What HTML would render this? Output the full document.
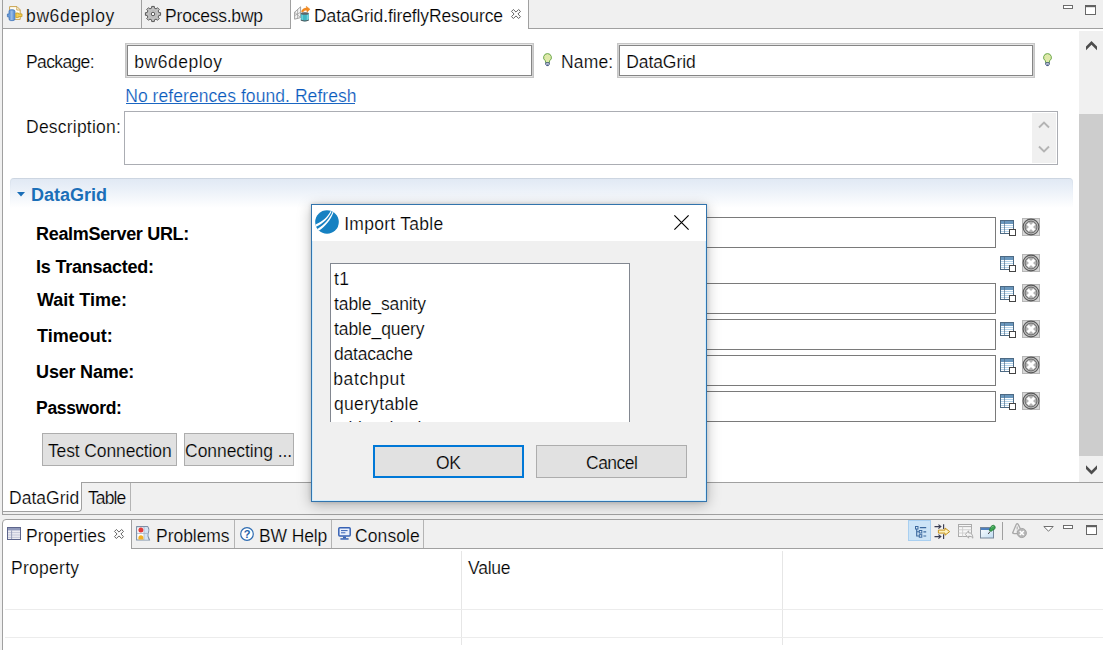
<!DOCTYPE html>
<html lang="en">
<head>
<meta charset="utf-8">
<title>DataGrid.fireflyResource - Import Table</title>
<style>
html,body{margin:0;padding:0;}
body{width:1103px;height:650px;overflow:hidden;background:#fff;position:relative;font-family:"Liberation Sans",sans-serif;}
.a{position:absolute;}
.t{position:absolute;white-space:nowrap;line-height:1;font-family:"Liberation Sans",sans-serif;color:#000;}
.ln{position:absolute;background:#a0a0a0;}
.inp2{position:absolute;box-sizing:border-box;border:1px solid #c6c6c6;background:#fff;}
.inp2 i{position:absolute;left:0;top:0;right:0;bottom:0;border:1px solid #e6e6e6;border-left-color:#cfcfcf;border-right-color:#cfcfcf;display:block;box-shadow:inset 0 0 0 1px #858585;}
.inp{position:absolute;box-sizing:border-box;border:1px solid #7a7a7a;background:#fff;}
.btn{position:absolute;box-sizing:border-box;border:1px solid #adadad;background:#e1e1e1;}
svg{position:absolute;overflow:visible;}
</style>
</head>
<body>
<!-- ===== top editor tab bar ===== -->
<div class="a" style="left:0;top:0;width:1103px;height:28px;background:#f0f0f0;"></div>
<div class="a" style="left:0;top:28px;width:3px;height:490px;background:#f0f0f0;"></div>
<div class="ln" style="left:2px;top:0;width:1px;height:514px;"></div>
<div class="ln" style="left:141px;top:0;width:1px;height:28px;"></div>
<div class="a" style="left:291px;top:0;width:237px;height:29px;background:#fff;"></div>
<div class="ln" style="left:290px;top:0;width:1px;height:28px;"></div>
<div class="ln" style="left:528px;top:0;width:1px;height:28px;"></div>
<div class="ln" style="left:3px;top:28px;width:288px;height:1px;"></div>
<div class="ln" style="left:528px;top:28px;width:575px;height:1px;"></div>
<svg style="left:7px;top:6px" width="16" height="15" viewBox="0 0 16 15"><path d="M2.6 0.6H10L13.2 3.8V13.4H2.6Z" fill="#fffdf2" stroke="#c9a350" stroke-width="1"/><path d="M9.8 0.8V4H13" fill="none" stroke="#c9a350" stroke-width="0.9"/><path d="M0.4 8H2V5.4Q2 3.8 3.6 3.8H6Q8 3.8 8 5.6V12.6Q8 14.6 6 14.6H3.6Q2 14.6 2 12.6V10.8H0.4Z" fill="#6a9bd8" stroke="#3f74b8" stroke-width="0.8"/><rect x="3.6" y="4.6" width="2" height="9.4" fill="#9fc0ea" opacity=".8"/><path d="M8.8 7H11.4V7.9H15V10.6H11.4V11.6H8.8Z" fill="#f3cf55" stroke="#c59a1c" stroke-width="0.8"/></svg>
<svg style="left:145px;top:6px" width="16" height="16" viewBox="0 0 16 16"><path d="M13.83 6.60 L15.59 6.68 L15.59 9.32 L13.83 9.40 L13.12 11.13 L14.30 12.43 L12.43 14.30 L11.13 13.12 L9.40 13.83 L9.32 15.59 L6.68 15.59 L6.60 13.83 L4.87 13.12 L3.57 14.30 L1.70 12.43 L2.88 11.13 L2.17 9.40 L0.41 9.32 L0.41 6.68 L2.17 6.60 L2.88 4.87 L1.70 3.57 L3.57 1.70 L4.87 2.88 L6.60 2.17 L6.68 0.41 L9.32 0.41 L9.40 2.17 L11.13 2.88 L12.43 1.70 L14.30 3.57 L13.12 4.87Z" fill="#c2c2c2" stroke="#585858" stroke-width="1" stroke-linejoin="round"/><circle cx="8" cy="8" r="3.4" fill="#cfcfcf" stroke="#a0a0a0" stroke-width="0.5"/><circle cx="8" cy="8" r="1.8" fill="#fafafa" stroke="#4e4e4e" stroke-width="1"/></svg>
<svg style="left:294px;top:6px" width="16" height="16" viewBox="0 0 16 16"><path d="M0.6 6.2L6.6 0.8V11.6L0.6 13.2Z" fill="#f4f4f4" stroke="#8c8c8c" stroke-width="0.8"/><path d="M0.6 9.7L6.6 6.2M3.6 3.5V12.4M0.6 6.2L6.6 11.6" fill="none" stroke="#9a9a9a" stroke-width="0.7"/><path d="M7.4 5.6C8.2 3 10.6 1.8 12.6 2.2L12.2 0.2L16 3.2L13 6.2L12.8 4.4C11.2 4.2 9.8 4.8 9 6.2Z" fill="#f58a1f" stroke="#e07a10" stroke-width="0.4"/><path d="M6.8 7.6Q10.8 5.8 14.8 7.6V14.2Q10.8 16.2 6.8 14.2Z" fill="#3fb7c4"/><path d="M8.2 8.4V14.6M13.4 8.4V14.6" stroke="#8fe0e6" stroke-width="1.2" opacity=".7"/><ellipse cx="10.8" cy="7.5" rx="4" ry="1.3" fill="#5e6468"/><path d="M6.8 13.6Q10.8 15.6 14.8 13.6V14.6Q10.8 16.6 6.8 14.6Z" fill="#4c5357"/></svg>
<svg style="left:511px;top:9px" width="10" height="10" viewBox="0 0 10 10"><path d="M0.5 2.4 L2.4 0.5 L5 3.1 L7.6 0.5 L9.5 2.4 L6.9 5 L9.5 7.6 L7.6 9.5 L5 6.9 L2.4 9.5 L0.5 7.6 L3.1 5 Z" fill="#fff" stroke="#5c5c5c" stroke-width="0.95" stroke-linejoin="miter"/></svg>
<svg style="left:1063px;top:5px" width="10" height="4" viewBox="0 0 10 4"><rect x="0.5" y="0.5" width="9" height="3" fill="#fff" stroke="#666" stroke-width="0.95"/></svg>
<svg style="left:1085px;top:5px" width="11" height="10" viewBox="0 0 11 10"><rect x="0.5" y="0.5" width="10" height="9" fill="#fff" stroke="#606060" stroke-width="0.95"/><rect x="0.5" y="0.5" width="10" height="1.7" fill="#606060"/></svg>
<svg style="left:543px;top:52.5px" width="9" height="13" viewBox="0 0 9 13"><path d="M4.5 0.6A3.9 3.9 0 0 1 6.6 7.8L6.4 9.6H2.6L2.4 7.8A3.9 3.9 0 0 1 4.5 0.6Z" fill="#dfe9a9" stroke="#6aa84c" stroke-width="1"/><path d="M2.7 9.8H6.3V11.4L5.4 12.6H3.6L2.7 11.4Z" fill="#e8ecf6" stroke="#3d4f7c" stroke-width="0.9"/><path d="M3.4 11.4H5.6L5.2 12.6H3.8Z" fill="#3d4f7c"/></svg>
<svg style="left:1043px;top:52.5px" width="9" height="13" viewBox="0 0 9 13"><path d="M4.5 0.6A3.9 3.9 0 0 1 6.6 7.8L6.4 9.6H2.6L2.4 7.8A3.9 3.9 0 0 1 4.5 0.6Z" fill="#dfe9a9" stroke="#6aa84c" stroke-width="1"/><path d="M2.7 9.8H6.3V11.4L5.4 12.6H3.6L2.7 11.4Z" fill="#e8ecf6" stroke="#3d4f7c" stroke-width="0.9"/><path d="M3.4 11.4H5.6L5.2 12.6H3.8Z" fill="#3d4f7c"/></svg>
<!-- ===== editor form ===== -->
<div class="inp2" style="left:125px;top:43px;width:409px;height:35px;"><i></i></div>
<div class="inp2" style="left:617px;top:43px;width:418px;height:35px;"><i></i></div>
<div class="inp" style="left:124px;top:111px;width:934px;height:54px;border-color:#abadb3;"></div>
<div class="a" style="left:1032px;top:113px;width:24px;height:50px;background:#f0f0f0;"></div>
<!-- section header -->
<div class="a" style="left:10px;top:178px;width:1063px;height:34px;border-radius:4px 4px 0 0;background:linear-gradient(#c3ccd8 0,#d6dfea 1px,#e6edf6 10px,#fff 30px);"></div>
<div class="a" style="left:11px;top:179px;width:1061px;height:33px;border-radius:3px 3px 0 0;background:linear-gradient(#e1e9f4 0,#eaf0f8 10px,#fff 29px);"></div>
<svg style="left:17px;top:192px" width="8" height="5" viewBox="0 0 8 5"><path d="M0 0H8L4 4.6Z" fill="#1b6fb8"/></svg>
<!-- field inputs -->
<div class="inp" style="left:330px;top:217px;width:666px;height:31px;"></div>
<div class="inp" style="left:330px;top:283px;width:666px;height:31px;"></div>
<div class="inp" style="left:330px;top:319px;width:666px;height:31px;"></div>
<div class="inp" style="left:330px;top:355px;width:666px;height:31px;"></div>
<div class="inp" style="left:330px;top:391px;width:666px;height:31px;"></div>
<svg style="left:1000px;top:220px" width="16" height="16" viewBox="0 0 16 16"><rect x="0.5" y="0.5" width="13" height="13" fill="#fff" stroke="#4d6a84" stroke-width="1"/><rect x="1" y="1" width="12" height="3" fill="#6a97bd"/><path d="M1 5.5H13M1 7.5H13M1 9.5H13M1 11.5H13" stroke="#b4d3ea" stroke-width="1"/><path d="M4.5 1V13" stroke="#4d6a84" stroke-width="0.9" opacity=".75"/><rect x="9.5" y="9.5" width="6" height="6" fill="#fff" stroke="#444" stroke-width="1"/></svg>
<svg style="left:1022px;top:218px" width="18" height="18" viewBox="0 0 18 18"><rect x="0.5" y="0.5" width="17" height="17" fill="#d7d7d7" stroke="#b6b6b6" stroke-width="1"/><circle cx="9" cy="9" r="7.9" fill="#cacaca" stroke="#585858" stroke-width="1.1"/><circle cx="9" cy="9" r="6" fill="#b2b2b2" stroke="#666" stroke-width="1"/><path d="M5.7 5.7L12.3 12.3M12.3 5.7L5.7 12.3" stroke="#fff" stroke-width="3" stroke-linecap="butt"/></svg>
<svg style="left:1000px;top:256px" width="16" height="16" viewBox="0 0 16 16"><rect x="0.5" y="0.5" width="13" height="13" fill="#fff" stroke="#4d6a84" stroke-width="1"/><rect x="1" y="1" width="12" height="3" fill="#6a97bd"/><path d="M1 5.5H13M1 7.5H13M1 9.5H13M1 11.5H13" stroke="#b4d3ea" stroke-width="1"/><path d="M4.5 1V13" stroke="#4d6a84" stroke-width="0.9" opacity=".75"/><rect x="9.5" y="9.5" width="6" height="6" fill="#fff" stroke="#444" stroke-width="1"/></svg>
<svg style="left:1022px;top:254px" width="18" height="18" viewBox="0 0 18 18"><rect x="0.5" y="0.5" width="17" height="17" fill="#d7d7d7" stroke="#b6b6b6" stroke-width="1"/><circle cx="9" cy="9" r="7.9" fill="#cacaca" stroke="#585858" stroke-width="1.1"/><circle cx="9" cy="9" r="6" fill="#b2b2b2" stroke="#666" stroke-width="1"/><path d="M5.7 5.7L12.3 12.3M12.3 5.7L5.7 12.3" stroke="#fff" stroke-width="3" stroke-linecap="butt"/></svg>
<svg style="left:1000px;top:286px" width="16" height="16" viewBox="0 0 16 16"><rect x="0.5" y="0.5" width="13" height="13" fill="#fff" stroke="#4d6a84" stroke-width="1"/><rect x="1" y="1" width="12" height="3" fill="#6a97bd"/><path d="M1 5.5H13M1 7.5H13M1 9.5H13M1 11.5H13" stroke="#b4d3ea" stroke-width="1"/><path d="M4.5 1V13" stroke="#4d6a84" stroke-width="0.9" opacity=".75"/><rect x="9.5" y="9.5" width="6" height="6" fill="#fff" stroke="#444" stroke-width="1"/></svg>
<svg style="left:1022px;top:284px" width="18" height="18" viewBox="0 0 18 18"><rect x="0.5" y="0.5" width="17" height="17" fill="#d7d7d7" stroke="#b6b6b6" stroke-width="1"/><circle cx="9" cy="9" r="7.9" fill="#cacaca" stroke="#585858" stroke-width="1.1"/><circle cx="9" cy="9" r="6" fill="#b2b2b2" stroke="#666" stroke-width="1"/><path d="M5.7 5.7L12.3 12.3M12.3 5.7L5.7 12.3" stroke="#fff" stroke-width="3" stroke-linecap="butt"/></svg>
<svg style="left:1000px;top:322px" width="16" height="16" viewBox="0 0 16 16"><rect x="0.5" y="0.5" width="13" height="13" fill="#fff" stroke="#4d6a84" stroke-width="1"/><rect x="1" y="1" width="12" height="3" fill="#6a97bd"/><path d="M1 5.5H13M1 7.5H13M1 9.5H13M1 11.5H13" stroke="#b4d3ea" stroke-width="1"/><path d="M4.5 1V13" stroke="#4d6a84" stroke-width="0.9" opacity=".75"/><rect x="9.5" y="9.5" width="6" height="6" fill="#fff" stroke="#444" stroke-width="1"/></svg>
<svg style="left:1022px;top:320px" width="18" height="18" viewBox="0 0 18 18"><rect x="0.5" y="0.5" width="17" height="17" fill="#d7d7d7" stroke="#b6b6b6" stroke-width="1"/><circle cx="9" cy="9" r="7.9" fill="#cacaca" stroke="#585858" stroke-width="1.1"/><circle cx="9" cy="9" r="6" fill="#b2b2b2" stroke="#666" stroke-width="1"/><path d="M5.7 5.7L12.3 12.3M12.3 5.7L5.7 12.3" stroke="#fff" stroke-width="3" stroke-linecap="butt"/></svg>
<svg style="left:1000px;top:358px" width="16" height="16" viewBox="0 0 16 16"><rect x="0.5" y="0.5" width="13" height="13" fill="#fff" stroke="#4d6a84" stroke-width="1"/><rect x="1" y="1" width="12" height="3" fill="#6a97bd"/><path d="M1 5.5H13M1 7.5H13M1 9.5H13M1 11.5H13" stroke="#b4d3ea" stroke-width="1"/><path d="M4.5 1V13" stroke="#4d6a84" stroke-width="0.9" opacity=".75"/><rect x="9.5" y="9.5" width="6" height="6" fill="#fff" stroke="#444" stroke-width="1"/></svg>
<svg style="left:1022px;top:356px" width="18" height="18" viewBox="0 0 18 18"><rect x="0.5" y="0.5" width="17" height="17" fill="#d7d7d7" stroke="#b6b6b6" stroke-width="1"/><circle cx="9" cy="9" r="7.9" fill="#cacaca" stroke="#585858" stroke-width="1.1"/><circle cx="9" cy="9" r="6" fill="#b2b2b2" stroke="#666" stroke-width="1"/><path d="M5.7 5.7L12.3 12.3M12.3 5.7L5.7 12.3" stroke="#fff" stroke-width="3" stroke-linecap="butt"/></svg>
<svg style="left:1000px;top:394px" width="16" height="16" viewBox="0 0 16 16"><rect x="0.5" y="0.5" width="13" height="13" fill="#fff" stroke="#4d6a84" stroke-width="1"/><rect x="1" y="1" width="12" height="3" fill="#6a97bd"/><path d="M1 5.5H13M1 7.5H13M1 9.5H13M1 11.5H13" stroke="#b4d3ea" stroke-width="1"/><path d="M4.5 1V13" stroke="#4d6a84" stroke-width="0.9" opacity=".75"/><rect x="9.5" y="9.5" width="6" height="6" fill="#fff" stroke="#444" stroke-width="1"/></svg>
<svg style="left:1022px;top:392px" width="18" height="18" viewBox="0 0 18 18"><rect x="0.5" y="0.5" width="17" height="17" fill="#d7d7d7" stroke="#b6b6b6" stroke-width="1"/><circle cx="9" cy="9" r="7.9" fill="#cacaca" stroke="#585858" stroke-width="1.1"/><circle cx="9" cy="9" r="6" fill="#b2b2b2" stroke="#666" stroke-width="1"/><path d="M5.7 5.7L12.3 12.3M12.3 5.7L5.7 12.3" stroke="#fff" stroke-width="3" stroke-linecap="butt"/></svg>
<!-- buttons -->
<div class="btn" style="left:42px;top:433px;width:135px;height:33px;"></div>
<div class="btn" style="left:184px;top:433px;width:110px;height:33px;"></div>
<!-- scrollbar -->
<div class="a" style="left:1079px;top:31px;width:24px;height:451px;background:#f0f0f0;"></div>
<div class="a" style="left:1079px;top:114px;width:24px;height:342px;background:#cdcdcd;"></div>
<svg style="left:1086px;top:41px" width="11" height="10" viewBox="0 0 11 10"><path d="M5.5 0L11 5.5V9.3L5.5 3.8L0 9.3V5.5Z" fill="#4d4d4d"/></svg>
<svg style="left:1086px;top:464.6px" width="11" height="10" viewBox="0 0 11 10"><path d="M5.5 9.5L11 4V0.2L5.5 5.7L0 0.2V4Z" fill="#4d4d4d"/></svg>
<!-- textarea inner scroll arrows -->
<svg style="left:1038px;top:121px" width="12" height="8" viewBox="0 0 12 8"><path d="M1 6.5L6 1.5L11 6.5" fill="none" stroke="#b4b4b4" stroke-width="1.9"/></svg>
<svg style="left:1038px;top:145px" width="12" height="8" viewBox="0 0 12 8"><path d="M1 1.5L6 6.5L11 1.5" fill="none" stroke="#b4b4b4" stroke-width="1.9"/></svg>
<!-- ===== bottom editor page tabs ===== -->
<div class="a" style="left:3px;top:482px;width:1100px;height:32px;background:#f0f0f0;"></div>
<div class="ln" style="left:3px;top:482px;width:1100px;height:1px;"></div>
<div class="a" style="left:3px;top:482px;width:79px;height:30px;background:#fff;border-radius:0 0 4px 0;border-right:1px solid #a0a0a0;border-bottom:1px solid #a0a0a0;box-sizing:border-box;"></div>
<div class="ln" style="left:130px;top:483px;width:1px;height:28px;background:#b4b4b4;"></div>
<div class="ln" style="left:2px;top:514px;width:1101px;height:1px;"></div>
<div class="a" style="left:0;top:515px;width:1103px;height:4px;background:#f0f0f0;"></div>
<!-- ===== bottom panel ===== -->
<div class="a" style="left:0;top:519px;width:1103px;height:131px;background:#f0f0f0;"></div>
<div class="a" style="left:2px;top:519px;width:1110px;height:140px;box-sizing:border-box;border:1px solid #a0a0a0;border-radius:4px 0 0 0;background:#fff;"></div>
<div class="a" style="left:131px;top:520px;width:972px;height:28px;background:#f0f0f0;"></div>
<div class="ln" style="left:131px;top:548px;width:972px;height:1px;"></div>
<div class="ln" style="left:131px;top:520px;width:1px;height:28px;"></div>
<div class="ln" style="left:234px;top:520px;width:1px;height:28px;background:#b4b4b4;"></div>
<div class="ln" style="left:331px;top:520px;width:1px;height:28px;background:#b4b4b4;"></div>
<div class="ln" style="left:423px;top:520px;width:1px;height:28px;background:#b4b4b4;"></div>
<!-- property table grid -->
<div class="ln" style="left:461px;top:551px;width:1px;height:94px;background:#e6e6e6;"></div>
<div class="ln" style="left:782px;top:551px;width:1px;height:94px;background:#e6e6e6;"></div>
<div class="ln" style="left:5px;top:609px;width:1098px;height:1px;background:#ececec;"></div>
<div class="ln" style="left:5px;top:637px;width:1098px;height:1px;background:#ececec;"></div>
<svg style="left:7px;top:527px" width="14" height="13" viewBox="0 0 14 13"><rect x="0.5" y="0.5" width="13" height="12" fill="#ececf2" stroke="#5d658c" stroke-width="1"/><rect x="1" y="1" width="12" height="2.4" fill="#9099bb"/><path d="M1 5.6H13M1 8H13M1 10.4H13" stroke="#b9bdd0" stroke-width="0.8"/><path d="M4.6 3.4V12" stroke="#8e96b4" stroke-width="0.9"/></svg>
<svg style="left:114px;top:529px" width="10" height="10" viewBox="0 0 10 10"><path d="M0.5 2.4 L2.4 0.5 L5 3.1 L7.6 0.5 L9.5 2.4 L6.9 5 L9.5 7.6 L7.6 9.5 L5 6.9 L2.4 9.5 L0.5 7.6 L3.1 5 Z" fill="#fff" stroke="#5c5c5c" stroke-width="0.95" stroke-linejoin="miter"/></svg>
<svg style="left:136px;top:526px" width="14" height="15" viewBox="0 0 14 15"><path d="M0.6 0.6H11.6Q13.8 3.4 12 7.4Q11 10.6 13.6 14H0.6Z" fill="#fff" stroke="#7d8fa6" stroke-width="1.1" stroke-linejoin="round"/><path d="M8.2 1.2H11.3Q13.2 3.6 11.5 7.4Q10.5 10.6 12.6 13.4H8.2Z" fill="#d3e3f5"/><path d="M8 1V13.6M1 7.4H12" stroke="#9fb0c4" stroke-width="0.8"/><circle cx="4.9" cy="4" r="2.5" fill="#e23a3a"/><path d="M2.4 13.4V11.8A2.5 2.5 0 0 1 7.4 11.8V13.4Z" fill="#f2b024"/></svg>
<svg style="left:240px;top:527px" width="14" height="14" viewBox="0 0 14 14"><circle cx="7" cy="7" r="6.3" fill="#fff" stroke="#2f6db2" stroke-width="1.2"/><text x="7" y="10.9" text-anchor="middle" font-family="Liberation Sans, sans-serif" font-weight="700" font-size="11" fill="#2462a8">?</text></svg>
<svg style="left:338px;top:527px" width="13" height="13" viewBox="0 0 13 13"><rect x="0.8" y="0.8" width="11.4" height="8.2" rx="1" fill="#e9effc" stroke="#3762b4" stroke-width="1.5"/><path d="M3 3.6H9.6M3 5.8H7.4" stroke="#3762b4" stroke-width="1"/><rect x="5" y="9.6" width="3" height="1.8" fill="#3762b4"/><rect x="2.4" y="11.2" width="8.2" height="1.5" fill="#3762b4"/></svg>
<div class="a" style="left:908px;top:520px;width:23px;height:21px;box-sizing:border-box;background:#cce4f7;border:1px solid #a9cff0;"></div>
<svg style="left:915px;top:526px" width="12" height="12" viewBox="0 0 12 12"><rect x="0.5" y="0.5" width="2.5" height="2.5" fill="#dcebf8" stroke="#3a689e" stroke-width="1"/><path d="M1.7 3V10H4M1.7 5.8H4" fill="none" stroke="#3a689e" stroke-width="1.1"/><rect x="4.3" y="4.5" width="2.5" height="2.5" fill="#dcebf8" stroke="#3a689e" stroke-width="1"/><rect x="4.3" y="8.7" width="2.5" height="2.5" fill="#dcebf8" stroke="#3a689e" stroke-width="1"/><path d="M4.8 1.7H11.2M8.4 5.8H11.2M8.4 10H11.2" stroke="#3a689e" stroke-width="1.2"/></svg>
<svg style="left:934px;top:524px" width="16" height="15" viewBox="0 0 16 15"><path d="M0.5 2.6H6.6M4.4 0.6L6.8 2.6L4.4 4.6M9.6 0.3V5" fill="none" stroke="#3a3d52" stroke-width="1.15"/><path d="M0.5 12.6H6.6M4.4 10.6L6.8 12.6L4.4 14.6M9.6 10.2V14.9" fill="none" stroke="#3a3d52" stroke-width="1.15"/><path d="M4.4 6.1H11V4L15.7 7.6L11 11.2V9.1H4.4Z" fill="#fdf1bd" stroke="#c6921c" stroke-width="1" stroke-linejoin="round"/></svg>
<svg style="left:958px;top:524px" width="16" height="15" viewBox="0 0 16 15"><rect x="0.5" y="0.5" width="13" height="12" fill="#f7f7f7" stroke="#ababab" stroke-width="1"/><path d="M0.5 2.6H13.5" stroke="#ababab" stroke-width="1"/><path d="M4.6 2.6V12.5M0.5 5.8H13.5M0.5 9H13.5" stroke="#cdcdcd" stroke-width="0.9"/><path d="M7.4 10.4L10.6 6.8V8.8Q14.8 8.8 14.9 14.2Q13.6 11.8 10.6 12.2V14.2Z" fill="#f2f2f2" stroke="#a8a8a8" stroke-width="0.95" stroke-linejoin="round"/></svg>
<svg style="left:980px;top:524px" width="16" height="15" viewBox="0 0 16 15"><linearGradient id="wg" x1="0" y1="0" x2="1" y2="1"><stop offset="0" stop-color="#fff"/><stop offset="1" stop-color="#bfdcf2"/></linearGradient><rect x="0.5" y="3.5" width="13" height="10.5" fill="url(#wg)" stroke="#76879a" stroke-width="1"/><rect x="1" y="4" width="12" height="2" fill="#4f80be"/><path d="M8.2 10L10.2 7.4" stroke="#444" stroke-width="1"/><path d="M9.4 6.6Q9.2 5 10.6 3.8Q11 1.4 13.2 1.2Q15.6 1.6 15.2 4Q14.6 5.8 12.6 6.2Q11.6 8 9.4 6.6Z" fill="#3da553" stroke="#237a37" stroke-width="0.8" stroke-linejoin="round"/><path d="M11.4 3.4Q12.2 2.2 13.4 2.4" fill="none" stroke="#8fd49c" stroke-width="0.8"/></svg>
<div class="ln" style="left:1002px;top:522px;width:1px;height:18px;background:#a0a0a0;"></div>
<svg style="left:1012px;top:523px" width="15" height="15" viewBox="0 0 15 15"><path d="M0.8 9.6L4.2 1.6Q5.2 -0.2 6.3 1.6L8 5" fill="none" stroke="#a9a9a9" stroke-width="1.3" stroke-linejoin="round" stroke-linecap="round"/><path d="M0.8 9.6Q0.6 10.6 2 10.6H4.8" fill="none" stroke="#a9a9a9" stroke-width="1.3" stroke-linecap="round"/><path d="M5.2 3.6V6.4M5.2 7.8V8.6" stroke="#b2b2b2" stroke-width="1.2"/><circle cx="9.8" cy="10" r="4.6" fill="#b6b6b6" stroke="#a2a2a2" stroke-width="0.9"/><path d="M7.8 8L11.8 12M11.8 8L7.8 12" stroke="#fff" stroke-width="1.7"/></svg>
<svg style="left:1043px;top:526px" width="11" height="6" viewBox="0 0 11 6"><path d="M0.8 0.5H10.2L5.5 5.2Z" fill="#fff" stroke="#606060" stroke-width="0.9" stroke-linejoin="round"/></svg>
<svg style="left:1063px;top:525px" width="10" height="4" viewBox="0 0 10 4"><rect x="0.5" y="0.5" width="9" height="3" fill="#fff" stroke="#666" stroke-width="0.95"/></svg>
<svg style="left:1086px;top:525px" width="11" height="10" viewBox="0 0 11 10"><rect x="0.5" y="0.5" width="10" height="9" fill="#fff" stroke="#606060" stroke-width="0.95"/><rect x="0.5" y="0.5" width="10" height="1.7" fill="#606060"/></svg>
<!-- ===== dialog ===== -->
<div class="a" style="left:311px;top:204px;width:396px;height:298px;box-sizing:border-box;border:1px solid #3274ad;background:#f0f0f0;box-shadow:0 3px 13px 0 rgba(0,0,0,.27),0 0 4px 0 rgba(0,0,0,.16),inset 0 0 0 1px rgba(205,236,255,.95);">
  <div class="a" style="left:0;top:0;width:394px;height:36px;background:#fff;"></div>
</div>
<!-- list box (clipped) -->
<div class="a" style="left:330px;top:263px;width:300px;height:159px;overflow:hidden;">
  <div class="a" style="left:0;top:0;width:300px;height:200px;box-sizing:border-box;border:1px solid #828790;background:#fff;"></div>
  <span class="t" id="l1" style="left:4.05px;top:7.69px;font-size:17.5px;letter-spacing:0.450px;-webkit-text-stroke:0.2px #fff;">t1</span>
<span class="t" id="l2" style="left:4.05px;top:33.19px;font-size:17.5px;letter-spacing:-0.123px;-webkit-text-stroke:0.2px #fff;">table_sanity</span>
<span class="t" id="l3" style="left:4.05px;top:58.19px;font-size:17.5px;letter-spacing:-0.090px;-webkit-text-stroke:0.2px #fff;">table_query</span>
<span class="t" id="l4" style="left:4.05px;top:83.19px;font-size:17.5px;letter-spacing:-0.225px;-webkit-text-stroke:0.2px #fff;">datacache</span>
<span class="t" id="l5" style="left:3.15px;top:108.19px;font-size:17.5px;letter-spacing:0.643px;-webkit-text-stroke:0.2px #fff;">batchput</span>
<span class="t" id="l6" style="left:4.05px;top:132.69px;font-size:17.5px;letter-spacing:0.300px;-webkit-text-stroke:0.2px #fff;">querytable</span>
<span class="t" id="l7" style="left:4.05px;top:156.69px;font-size:17.5px;letter-spacing:-0.123px;-webkit-text-stroke:0.2px #fff;">table_check</span>
</div>
<div class="btn" style="left:373px;top:445px;width:151px;height:33px;border:2px solid #0078d7;"></div>
<div class="btn" style="left:536px;top:445px;width:151px;height:33px;"></div>
<svg style="left:315.2px;top:210px" width="24" height="24" viewBox="0 0 24 24"><circle cx="12" cy="12" r="11.8" fill="#1681c2"/><path d="M15.6 1.0C12.6 7.2 7.4 11.6 0.5 14.4L1.0 16.8C8.2 13.2 13.4 8.2 16.6 1.4Z" fill="#fff"/><path d="M17.6 1.8C14.6 9 9.4 14.6 2.4 19L3.8 20.8C10.8 16 15.8 10 18.5 2.3Z" fill="#fff"/></svg>
<svg style="left:674px;top:215px" width="15" height="15" viewBox="0 0 15 15"><path d="M0.4 0.4L14.6 14.6M14.6 0.4L0.4 14.6" stroke="#000" stroke-width="1.15"/></svg>
<!-- ===== text ===== -->
<div class="a" style="left:126px;top:103px;width:229px;height:1px;background:#1a66c2;"></div>
<span class="t" id="tab1" style="left:26.10px;top:8.19px;font-size:17.5px;font-weight:400;color:#000;letter-spacing:0.562px;-webkit-text-stroke:0.2px #f0f0f0;">bw6deploy</span>
<span class="t" id="tab2" style="left:165.10px;top:8.19px;font-size:17.5px;font-weight:400;color:#000;letter-spacing:-0.225px;-webkit-text-stroke:0.2px #f0f0f0;">Process.bwp</span>
<span class="t" id="tab3" style="left:314.10px;top:8.19px;font-size:17.5px;font-weight:400;color:#000;letter-spacing:-0.117px;-webkit-text-stroke:0.2px #fff;">DataGrid.fireflyResource</span>
<span class="t" id="lpkg" style="left:26.10px;top:53.69px;font-size:17.5px;font-weight:400;color:#000;letter-spacing:-0.643px;-webkit-text-stroke:0.2px #fff;">Package:</span>
<span class="t" id="vpkg" style="left:134.30px;top:53.69px;font-size:17.5px;font-weight:400;color:#000;letter-spacing:0.506px;-webkit-text-stroke:0.2px #fff;">bw6deploy</span>
<span class="t" id="lname" style="left:561.10px;top:53.69px;font-size:17.5px;font-weight:400;color:#000;letter-spacing:0.113px;-webkit-text-stroke:0.2px #fff;">Name:</span>
<span class="t" id="vname" style="left:626.15px;top:53.69px;font-size:17.5px;font-weight:400;color:#000;letter-spacing:-0.064px;-webkit-text-stroke:0.2px #fff;">DataGrid</span>
<span class="t" id="link" style="left:125.20px;top:87.89px;font-size:17.5px;font-weight:400;color:#0a5bbd;letter-spacing:0.067px;-webkit-text-stroke:0.2px #fff;">No references found. Refresh</span>
<span class="t" id="ldesc" style="left:26.10px;top:118.69px;font-size:17.5px;font-weight:400;color:#000;letter-spacing:0.205px;-webkit-text-stroke:0.2px #fff;">Description:</span>
<span class="t" id="sec" style="left:31.10px;top:186.26px;font-size:18px;font-weight:700;color:#1b6fb8;letter-spacing:0.000px;">DataGrid</span>
<span class="t" id="r1" style="left:36.10px;top:225.26px;font-size:18px;font-weight:700;color:#000;letter-spacing:-0.330px;">RealmServer URL:</span>
<span class="t" id="r2" style="left:36.10px;top:258.26px;font-size:18px;font-weight:700;color:#000;letter-spacing:-0.242px;">Is Transacted:</span>
<span class="t" id="r3" style="left:37.00px;top:291.26px;font-size:18px;font-weight:700;color:#000;letter-spacing:0.000px;">Wait Time:</span>
<span class="t" id="r4" style="left:37.00px;top:326.76px;font-size:18px;font-weight:700;color:#000;letter-spacing:0.000px;">Timeout:</span>
<span class="t" id="r5" style="left:36.10px;top:363.26px;font-size:18px;font-weight:700;color:#000;letter-spacing:-0.200px;">User Name:</span>
<span class="t" id="r6" style="left:36.05px;top:399.69px;font-size:17.5px;font-weight:700;color:#000;letter-spacing:-0.338px;">Password:</span>
<span class="t" id="b1" style="left:48.00px;top:443.19px;font-size:17.5px;font-weight:400;color:#000;letter-spacing:-0.129px;-webkit-text-stroke:0.2px #e1e1e1;">Test Connection</span>
<span class="t" id="b2" style="left:185.10px;top:443.19px;font-size:17.5px;font-weight:400;color:#000;letter-spacing:-0.069px;-webkit-text-stroke:0.2px #e1e1e1;">Connecting ...</span>
<span class="t" id="bt1" style="left:9.10px;top:490.19px;font-size:17.5px;font-weight:400;color:#000;letter-spacing:0.000px;-webkit-text-stroke:0.2px #fff;">DataGrid</span>
<span class="t" id="bt2" style="left:88.00px;top:490.19px;font-size:17.5px;font-weight:400;color:#000;letter-spacing:-0.900px;-webkit-text-stroke:0.2px #f0f0f0;">Table</span>
<span class="t" id="p1" style="left:26.10px;top:527.69px;font-size:17.5px;font-weight:400;color:#000;letter-spacing:0.000px;-webkit-text-stroke:0.2px #fff;">Properties</span>
<span class="t" id="p2" style="left:156.10px;top:527.69px;font-size:17.5px;font-weight:400;color:#000;letter-spacing:-0.064px;-webkit-text-stroke:0.2px #f0f0f0;">Problems</span>
<span class="t" id="p3" style="left:259.10px;top:527.69px;font-size:17.5px;font-weight:400;color:#000;letter-spacing:-0.150px;-webkit-text-stroke:0.2px #f0f0f0;">BW Help</span>
<span class="t" id="p4" style="left:355.10px;top:527.69px;font-size:17.5px;font-weight:400;color:#000;letter-spacing:0.075px;-webkit-text-stroke:0.2px #f0f0f0;">Console</span>
<span class="t" id="c1" style="left:11.10px;top:559.69px;font-size:17.5px;font-weight:400;color:#000;letter-spacing:0.257px;-webkit-text-stroke:0.2px #fff;">Property</span>
<span class="t" id="c2" style="left:468.00px;top:559.69px;font-size:17.5px;font-weight:400;color:#000;letter-spacing:-0.225px;-webkit-text-stroke:0.2px #fff;">Value</span>
<span class="t" id="dt" style="left:344.15px;top:215.69px;font-size:17.5px;font-weight:400;color:#000;letter-spacing:0.286px;-webkit-text-stroke:0.2px #fff;">Import Table</span>
<span class="t" id="ok" style="left:436.05px;top:454.69px;font-size:17.5px;font-weight:400;color:#000;letter-spacing:-0.450px;-webkit-text-stroke:0.2px #e1e1e1;">OK</span>
<span class="t" id="cancel" style="left:586.05px;top:454.69px;font-size:17.5px;font-weight:400;color:#000;letter-spacing:-0.540px;-webkit-text-stroke:0.2px #e1e1e1;">Cancel</span>
</body>
</html>
